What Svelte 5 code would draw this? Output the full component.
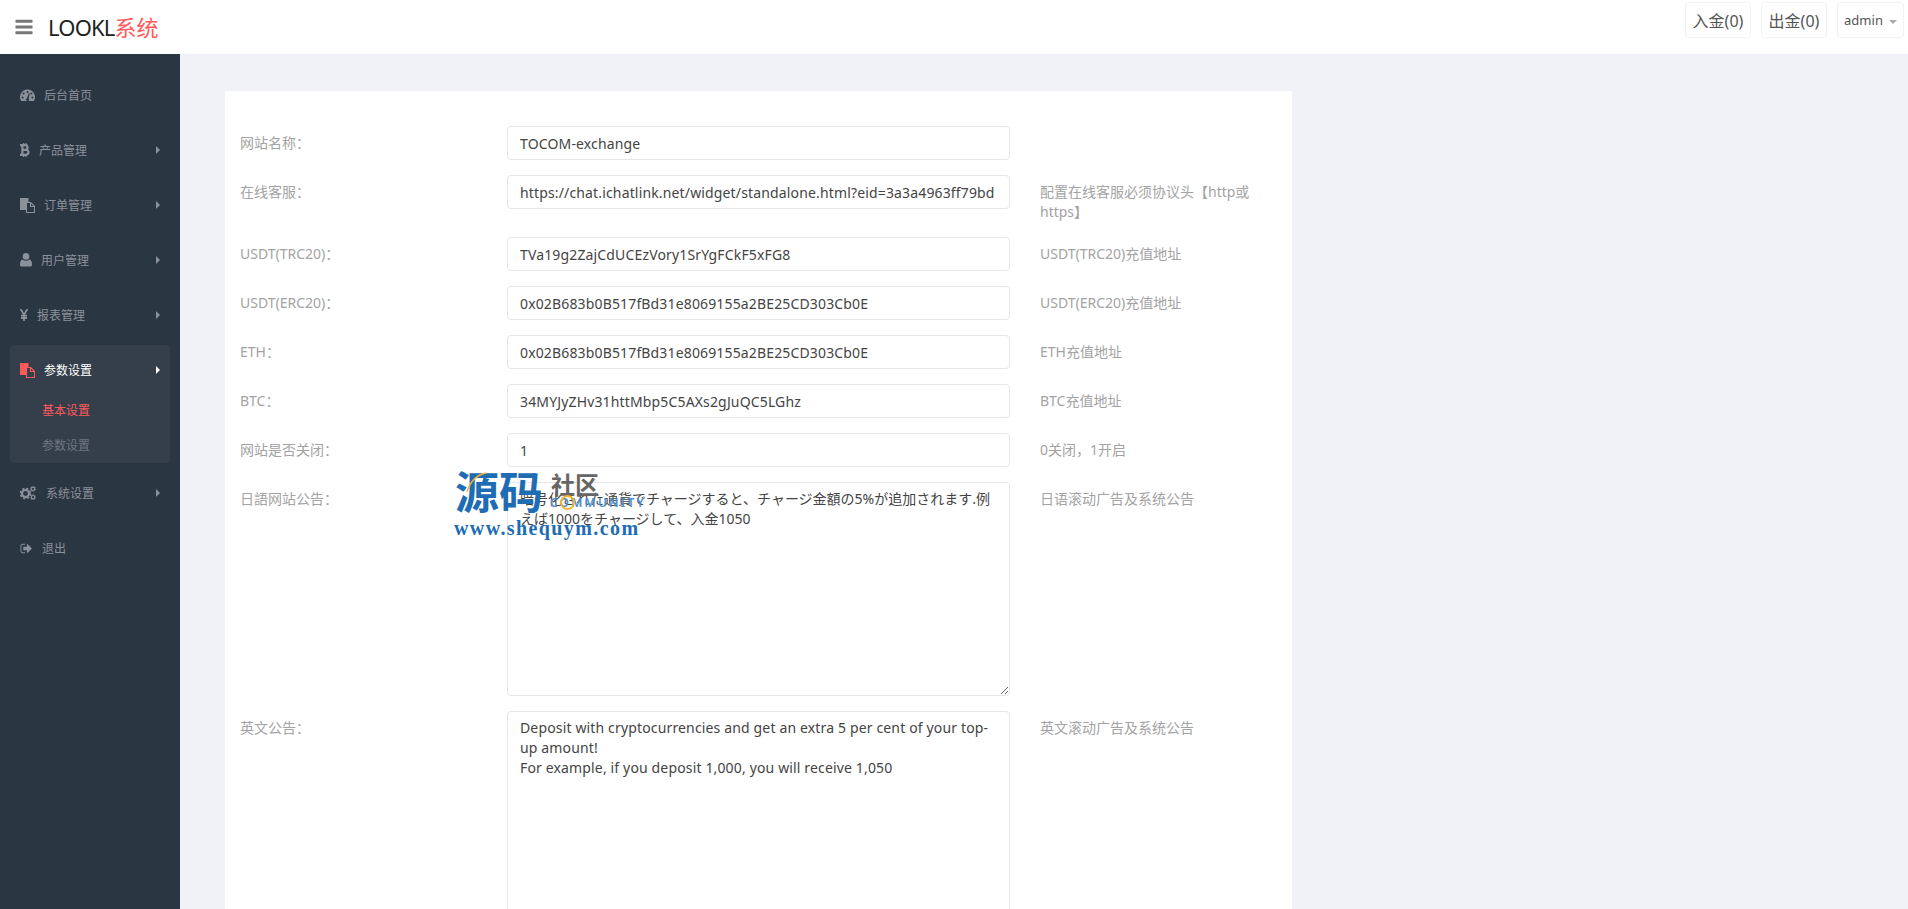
<script lang="ts">
  type MenuItem = {
    label: string;
    icon: string;
    arrow?: boolean;
    active?: boolean;
    children?: { label: string; active?: boolean }[];
  };

  type Field = {
    label: string;
    value: string;
    help?: string;
    rows?: number;
    cjk?: boolean;
  };

  const menu: MenuItem[] = [
    { label: '后台首页', icon: 'dashboard' },
    { label: '产品管理', icon: 'bitcoin', arrow: true },
    { label: '订单管理', icon: 'files', arrow: true },
    { label: '用户管理', icon: 'user', arrow: true },
    { label: '报表管理', icon: 'yen', arrow: true },
    {
      label: '参数设置',
      icon: 'files',
      arrow: true,
      active: true,
      children: [{ label: '基本设置', active: true }, { label: '参数设置' }],
    },
    { label: '系统设置', icon: 'cogs', arrow: true },
    { label: '退出', icon: 'signout' },
  ];

  const fields: Field[] = [
    { label: '网站名称：', value: 'TOCOM-exchange' },
    {
      label: '在线客服：',
      value: 'https://chat.ichatlink.net/widget/standalone.html?eid=3a3a4963ff79bd',
      help: '配置在线客服必须协议头【http或https】',
    },
    { label: 'USDT(TRC20)：', value: 'TVa19g2ZajCdUCEzVory1SrYgFCkF5xFG8', help: 'USDT(TRC20)充值地址' },
    { label: 'USDT(ERC20)：', value: '0x02B683b0B517fBd31e8069155a2BE25CD303Cb0E', help: 'USDT(ERC20)充值地址' },
    { label: 'ETH：', value: '0x02B683b0B517fBd31e8069155a2BE25CD303Cb0E', help: 'ETH充值地址' },
    { label: 'BTC：', value: '34MYJyZHv31httMbp5C5AXs2gJuQC5LGhz', help: 'BTC充值地址' },
    { label: '网站是否关闭：', value: '1', help: '0关闭，1开启' },
    {
      label: '日語网站公告：',
      value: '暗号化された通貨でチャージすると、チャージ金額の5%が追加されます.例えば1000をチャージして、入金1050',
      help: '日语滚动广告及系统公告',
      rows: 10,
      cjk: true,
    },
    {
      label: '英文公告：',
      value:
        'Deposit with cryptocurrencies and get an extra 5 per cent of your top-up amount!\nFor example, if you deposit 1,000, you will receive 1,050',
      help: '英文滚动广告及系统公告',
      rows: 10,
    },
  ];
</script>

{#snippet icon(name: string)}
  {#if name === 'dashboard'}
    <svg class="ico" width="15" height="14" viewBox="0 0 15 14">
      <path fill="currentColor" d="M7.5 1.5A7.5 7.5 0 0 0 1.2 13h12.6A7.5 7.5 0 0 0 7.5 1.5z" />
      <circle cx="7.5" cy="4" r="1" fill="#2b3643" />
      <circle cx="3.6" cy="5.6" r="1" fill="#2b3643" />
      <circle cx="11.4" cy="5.6" r="1" fill="#2b3643" />
      <circle cx="2.6" cy="9.4" r="1" fill="#2b3643" />
      <circle cx="12.4" cy="9.4" r="1" fill="#2b3643" />
      <path fill="#2b3643" d="M8.9 5 9.8 5.3 8.6 10.4A1.5 1.5 0 1 1 6.9 10.2z" />
    </svg>
  {:else if name === 'bitcoin'}
    <svg class="ico" width="10" height="14" viewBox="0 0 10 14">
      <path fill="none" stroke="currentColor" stroke-width="2.2" d="M2.4 2.2v9.6M0 2.2h5.2a2.2 2.2 0 0 1 0 4.6H2.4h3.6a2.5 2.5 0 0 1 0 5H0" />
      <path fill="none" stroke="currentColor" stroke-width="1.2" d="M3.6 0v2M6 0v2M3.6 12v2M6 12v2" />
    </svg>
  {:else if name === 'files'}
    <svg class="ico" width="15" height="15" viewBox="0 0 15 15">
      <path fill="currentColor" d="M0 0h8.5v4H6v8H0z" />
      <path fill="none" stroke="currentColor" stroke-width="1.1" d="M6.5 4.5h4.2l3.8 3.8v6.2H6.5zM10.500 4.500v4h4" />
    </svg>
  {:else if name === 'user'}
    <svg class="ico" width="12" height="14" viewBox="0 0 12 14">
      <circle cx="6" cy="3.4" r="3.3" fill="currentColor" />
      <path fill="currentColor" d="M2.6 6.6C1 7 0 8.5 0 11.4 0 13 .8 13.6 2 13.6h8c1.2 0 2-.6 2-2.2 0-2.9-1-4.4-2.6-4.8C8.500 7.400 7.300 7.800 6 7.800S3.500 7.400 2.600 6.600z" />
    </svg>
  {:else if name === 'yen'}
    <svg class="ico" width="8" height="12" viewBox="0 0 8 12">
      <path fill="none" stroke="currentColor" stroke-width="1.8" d="M.6 0 4 5.600 7.400 0M4 5.600V12M1 6.600h6M1 9h6" />
    </svg>
  {:else if name === 'cogs'}
    <svg class="ico" width="17" height="14" viewBox="0 0 17 14">
      <circle cx="5.500" cy="7.500" r="3.500" fill="none" stroke="currentColor" stroke-width="2.200" />
      <circle cx="5.500" cy="7.500" r="5" fill="none" stroke="currentColor" stroke-width="1.600" stroke-dasharray="2.200 1.730" />
      <circle cx="13" cy="2.800" r="1.700" fill="none" stroke="currentColor" stroke-width="1.200" />
      <circle cx="13" cy="2.800" r="2.600" fill="none" stroke="currentColor" stroke-width=".900" stroke-dasharray="1.200 1.100" />
      <circle cx="13" cy="11.200" r="1.700" fill="none" stroke="currentColor" stroke-width="1.200" />
      <circle cx="13" cy="11.200" r="2.600" fill="none" stroke="currentColor" stroke-width=".900" stroke-dasharray="1.200 1.100" />
    </svg>
  {:else if name === 'signout'}
    <svg class="ico" width="13" height="13" viewBox="0 0 1792 1792">
      <path fill="currentColor" d="M704 1440q0 4 1 20t.5 26.500-3 23.500-10 19.500-20.500 6.500h-320q-119 0-203.500-84.500t-84.500-203.500v-704q0-119 84.500-203.500t203.500-84.500h320q13 0 22.500 9.500t9.500 22.500q0 4 1 20t.5 26.500-3 23.500-10 19.500-20.500 6.500h-320q-66 0-113 47t-47 113v704q0 66 47 113t113 47h312l11.500 1 11.500 3 8 5.500 7 9 2 13.500zm928-544q0 26-19 45l-544 544q-19 19-45 19t-45-19-19-45v-288h-448q-26 0-45-19t-19-45v-384q0-26 19-45t45-19h448v-288q0-26 19-45t45-19 45 19l544 544q19 19 19 45z" />
    </svg>
  {/if}
{/snippet}

<div class="page">
  <header class="topbar">
    <svg class="burger" width="20" height="20" viewBox="0 0 1792 1792">
      <path fill="currentColor" d="M1664 1344v128q0 26-19 45t-45 19h-1408q-26 0-45-19t-19-45v-128q0-26 19-45t45-19h1408q26 0 45 19t19 45zm0-512v128q0 26-19 45t-45 19h-1408q-26 0-45-19t-19-45v-128q0-26 19-45t45-19h1408q26 0 45 19t19 45zm0-512v128q0 26-19 45t-45 19h-1408q-26 0-45-19t-19-45v-128q0-26 19-45t45-19h1408q26 0 45 19t19 45z" />
    </svg>
    <div class="logo">LOOKL<span>系统</span></div>
    <div class="top-actions">
      <button class="top-btn">入金(0)</button>
      <button class="top-btn">出金(0)</button>
      <button class="top-btn admin">admin<i class="caret"></i></button>
    </div>
  </header>

  <div class="body">
    <aside class="sidebar">
      {#each menu as item}
        <div class="group" class:open={item.active}>
          <div class="item" class:active={item.active}>
            {@render icon(item.icon)}
            <span>{item.label}</span>
            {#if item.arrow}<i class="arrow"></i>{/if}
          </div>
          {#if item.children}
            <div class="sub">
              {#each item.children as child}
                <div class="sub-item" class:active={child.active}>{child.label}</div>
              {/each}
            </div>
          {/if}
        </div>
      {/each}
    </aside>

    <main class="main">
      <section class="card">
        {#each fields as field}
          <div class="row">
            <div class="label">{field.label}</div>
            <div class="control">
              {#if field.rows}
                <textarea class:cjk={field.cjk} value={field.value}></textarea>
              {:else}
                <input type="text" value={field.value} />
              {/if}
            </div>
            <div class="help">{field.help ?? ''}</div>
          </div>
        {/each}
      </section>

      <div class="watermark">
        <span class="wm-big">源码</span>
        <span class="wm-small">社区</span>
        <span class="wm-en">COMMUNITY</span>
        <span class="wm-ring"></span>
        <span class="wm-url">www.shequym.com</span>
        <svg class="wm-swoosh" width="22" height="22" viewBox="0 0 22 22">
          <path fill="none" stroke="#f2b632" stroke-width="1.300" d="M1 20C4 10 10 3 20 1" />
        </svg>
      </div>
    </main>
  </div>
</div>

<style>
  :global(body) {
    margin: 0;
    font-family: 'Noto Sans', 'Noto Sans CJK SC', sans-serif;
  }

  .page {
    height: 100vh;
    overflow: hidden;
    display: flex;
    flex-direction: column;
    background: #f0f2f7;
  }

  .topbar {
    height: 54px;
    flex: none;
    display: flex;
    align-items: center;
    padding: 0 4px 0 14px;
    background: #fff;
  }

  .burger {
    color: #777;
  }

  .logo {
    margin-left: 14px;
    margin-top: -2px;
    font-size: 22px;
    letter-spacing: -0.8px;
    color: #222;
  }

  .logo span {
    letter-spacing: 0;
    color: #ff5a5a;
  }

  .top-actions {
    margin-left: auto;
    display: flex;
    gap: 10px;
    margin-top: -14px;
  }

  .top-btn {
    width: 66px;
    height: 36px;
    padding: 0;
    border: 1px solid #f0f2f7;
    border-radius: 4px;
    background: #fff;
    color: #555;
    font: inherit;
    font-size: 16px;
  }

  .admin {
    width: 67px;
    font-size: 13px;
  }

  .caret {
    display: inline-block;
    margin-left: 6px;
    border-top: 4px solid #aaa;
    border-left: 4px solid transparent;
    border-right: 4px solid transparent;
    vertical-align: middle;
  }

  .body {
    flex: 1;
    display: flex;
    min-height: 0;
  }

  .sidebar {
    width: 180px;
    flex: none;
    padding-top: 16px;
    box-sizing: border-box;
    background: #2b3643;
    color: #8b9199;
    font-size: 12px;
  }

  .group {
    margin-bottom: 5px;
  }

  .group.open {
    margin: 0 10px 5px;
    border-radius: 4px;
    background: #353f4c;
  }

  .item {
    position: relative;
    height: 50px;
    display: flex;
    align-items: center;
    padding-left: 20px;
  }

  .open .item {
    padding-left: 10px;
    color: #fff;
  }

  .open .item .ico {
    color: #ff5a5a;
  }

  .ico {
    flex: none;
    margin-right: 9px;
  }

  .arrow {
    position: absolute;
    left: 156px;
    top: 21px;
    border-left: 4px solid currentColor;
    border-top: 4px solid transparent;
    border-bottom: 4px solid transparent;
  }

  .open .arrow {
    left: 146px;
  }

  .sub {
    margin-top: -2px;
  }

  .sub-item {
    height: 35px;
    line-height: 35px;
    padding-left: 32px;
    color: #6e7681;
  }

  .sub-item.active {
    color: #ff5a5a;
  }

  .main {
    flex: 1;
    position: relative;
    padding: 37px 0 0 45px;
    min-width: 0;
  }

  .card {
    width: 1067px;
    padding-top: 35px;
    background: #fff;
  }

  .row {
    display: grid;
    grid-template-columns: 267px 533px 267px;
    margin-bottom: 15px;
    font-size: 14px;
    line-height: 20px;
  }

  .label {
    padding: 7px 15px 0 15px;
    color: #a3a3a3;
  }

  .control {
    padding: 0 15px;
  }

  .help {
    padding: 7px 15px 0;
    color: #a3a3a3;
  }

  input,
  textarea {
    display: block;
    width: 100%;
    box-sizing: border-box;
    padding: 6px 12px;
    border: 1px solid #e5e6e7;
    border-radius: 4px;
    background: #fff;
    color: #444;
    font: inherit;
    letter-spacing: 0.15px;
    outline: none;
  }

  input {
    height: 34px;
  }

  textarea {
    height: 214px;
  }

  textarea.cjk {
    letter-spacing: 0;
  }

  .watermark {
    position: absolute;
    left: 274px;
    top: 414px;
    width: 200px;
    height: 70px;
    pointer-events: none;
    color: #1e6cb4;
  }

  .watermark span,
  .watermark svg {
    position: absolute;
  }

  .wm-big {
    left: 1px;
    top: -1px;
    font-size: 44px;
    line-height: 50px;
    font-weight: 700;
    white-space: nowrap;
  }

  .wm-small {
    left: 97px;
    top: 4px;
    font-size: 24px;
    line-height: 26px;
    font-weight: 700;
    color: #666;
    white-space: nowrap;
  }

  .wm-en {
    left: 96px;
    top: 28px;
    font-size: 12px;
    line-height: 14px;
    font-weight: 600;
    letter-spacing: 2.2px;
    color: #4f8fcf;
    white-space: nowrap;
  }

  .wm-ring {
    left: 106px;
    top: 27px;
    width: 11px;
    height: 11px;
    border: 2px solid #f2b632;
    border-radius: 50%;
  }

  .wm-url {
    left: 0;
    top: 50px;
    font-family: 'Liberation Serif', serif;
    font-size: 20px;
    line-height: 20px;
    font-weight: 700;
    letter-spacing: 1.4px;
    white-space: nowrap;
  }

  .wm-swoosh {
    left: 12px;
    top: 4px;
  }
</style>
